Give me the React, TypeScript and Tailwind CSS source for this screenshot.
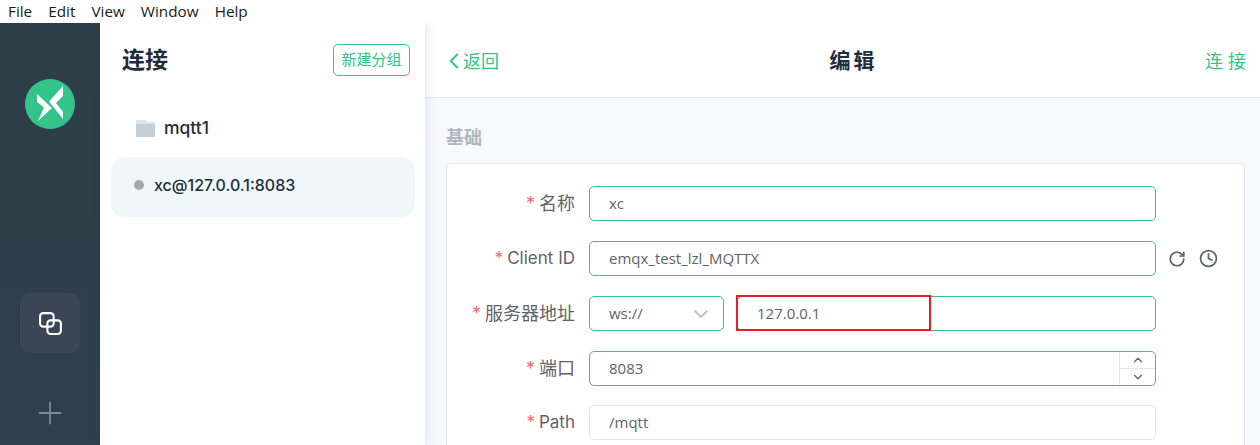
import { ChevronDown, ChevronLeft, ChevronUp, Clock, Plus, RotateCw } from 'lucide-react'
import type { ReactNode } from 'react'

const menus = ['File', 'Edit', 'View', 'Window', 'Help']

const Logo = () => (
  <svg viewBox="0 0 50 50" className="h-[50px] w-[50px]">
    <circle cx="25" cy="25" r="25" fill="#34c388" />
    <path d="M12 15 L27 29 L13 42 L19 28.5 L12 23 Z" fill="#fff" />
    <path d="M38 7 L38 17 L31 24 L38 33 L38 40 L24 22.5 Z" fill="#fff" />
  </svg>
)

const Field = ({
  label,
  children,
  after,
  latin = false,
  className = '',
}: {
  label: string
  children: ReactNode
  after?: ReactNode
  latin?: boolean
  className?: string
}) => (
  <div className={`flex items-center ${className}`}>
    <label
      className={`w-[128px] text-right leading-none text-[#5f6368] ${
        latin ? 'text-[17px]' : 'text-[18px]'
      }`}
    >
      <span className="mr-1 text-[#f56c6c]">*</span>
      {label}
    </label>
    <div className="ml-[14px] flex w-[567px] gap-[13px]">{children}</div>
    {after}
  </div>
)

const Input = ({
  value,
  active = true,
  children,
  className = '',
}: {
  value: string
  active?: boolean
  children?: ReactNode
  className?: string
}) => (
  <div
    className={`flex h-[35px] items-center rounded-[5px] border pl-[19px] font-['Open_Sans',sans-serif] text-[15px] text-[#5f6368] ${
      active ? 'border-[#34c388]' : 'border-[#e4e7f0]'
    } ${className}`}
  >
    <span className="flex-1">{value}</span>
    {children}
  </div>
)

export default function App() {
  return (
    <div className="flex h-[445px] w-[1260px] flex-col overflow-hidden bg-white font-['Inter','Noto_Sans_CJK_SC',sans-serif]">
      <div className="relative z-20 flex h-[23px] shrink-0 items-center gap-[16px] bg-white pl-2 font-['Open_Sans',sans-serif] text-[15.3px] text-[#1a1a1a]">
        {menus.map((m) => (
          <span key={m}>{m}</span>
        ))}
      </div>

      <div className="flex min-h-0 flex-1">
        <aside className="flex w-[100px] shrink-0 flex-col items-center bg-gradient-to-b from-[#2c3e47] to-[#303f4d] pt-[56px]">
          <Logo />
          <div className="mt-[164px] flex h-[60px] w-[60px] items-center justify-center rounded-[10px] bg-[#3a4655]">
            <svg viewBox="0 0 24 24" className="h-[25px] w-[25px]" fill="none" stroke="#fff" strokeWidth="2">
              <rect x="2" y="2" width="13" height="13" rx="3" />
              <rect x="9" y="9" width="13" height="13" rx="3" />
            </svg>
          </div>
          <Plus className="mt-[42px] h-[36px] w-[36px] text-[#7c8a94]" strokeWidth={1.2} />
        </aside>

        <section className="relative z-10 w-[325px] shrink-0 bg-white pl-[11px] pr-[10px] shadow-[2px_0_10px_rgba(60,70,130,0.12)]">
          <div className="flex h-[74px] items-center justify-between pl-[11px] pr-[5px]">
            <h2 className="text-[23px] font-bold text-[#232c3b]">连接</h2>
            <button className="h-[32px] w-[77px] rounded-[5px] border border-[#34c388] text-[15px] text-[#34c388]">
              新建分组
            </button>
          </div>
          <div className="mt-[4px] flex h-[56px] items-center gap-[9px] pb-[2px] pl-[25px] text-[17.5px] font-medium text-[#232c3b]">
            <svg viewBox="0 0 19 18" className="h-[18px] w-[19px]">
              <path d="M0 1 H9 L11 3 H19 V18 H0 Z" fill="#c3d0d9" />
              <path d="M0 1 H9 L11 3 H19 V5 H0 Z" fill="#dfe6eb" />
            </svg>
            mqtt1
          </div>
          <div className="flex h-[60px] items-center gap-[10px] rounded-[13px] bg-[#f0f7fb] pb-[4px] pl-[23px] text-[16px] font-medium text-[#232c3b]">
            <span className="h-[10px] w-[10px] rounded-full bg-[#a2a9b0]" />
            xc@127.0.0.1:8083
          </div>
        </section>

        <main className="flex min-w-0 flex-1 flex-col bg-[#f8f9fd]">
          <header className="flex h-[75px] shrink-0 items-center justify-between border-b border-[#e4e7f0] bg-white pl-[21px] pr-[9px] pt-[2px]">
            <div className="flex items-center text-[18px] text-[#34c388]">
              <ChevronLeft className="-mx-[5px] h-[26px] w-[26px]" strokeWidth={1.8} />
              <span className="ml-[1px]">返回</span>
            </div>
            <h1 className="ml-[3px] text-[21px] font-bold tracking-[3px] text-[#232c3b]">编辑</h1>
            <div className="text-[18px] tracking-[5px] text-[#34c388]">连接</div>
          </header>

          <div className="flex-1 overflow-hidden pl-[21px] pr-[15px]">
            <h3 className="mt-[27px] text-[18px] font-bold leading-[26px] text-[#b0b6bd]">基础</h3>
            <div className="mt-[12px] flex flex-col gap-[20px] rounded-t-[5px] border border-[#e4e7f0] bg-white pb-10 pt-[22px]">
              <Field label="名称">
                <Input value="xc" className="w-full" />
              </Field>
              <Field
                label="Client ID"
                latin
                after={
                  <div className="ml-[12px] flex items-center gap-[13px] text-[#5f6368]">
                    <RotateCw className="h-[18px] w-[18px]" strokeWidth={2.3} />
                    <Clock className="h-[19px] w-[19px]" strokeWidth={2.2} />
                  </div>
                }
              >
                <Input value="emqx_test_lzl_MQTTX" className="w-full" />
              </Field>
              <Field label="服务器地址">
                <Input value="ws://" className="w-[135px] shrink-0 pr-[10px]">
                  <ChevronDown className="h-[24px] w-[24px] text-[#c0c4cc]" strokeWidth={2} />
                </Input>
                <div className="relative min-w-0 flex-1">
                  <Input value="127.0.0.1" className="w-full" />
                  <div className="absolute -left-[1px] -top-[1px] h-[36px] w-[195px] border-2 border-[#ed1c24]" />
                </div>
              </Field>
              <Field label="端口">
                <Input value="8083" className="w-full">
                  <div className="flex h-full w-[36px] flex-col border-l border-[#e4e7f0] text-[#5f6368]">
                    <div className="flex flex-1 items-center justify-center border-b border-[#e4e7f0]">
                      <ChevronUp className="h-[14px] w-[14px]" />
                    </div>
                    <div className="flex flex-1 items-center justify-center">
                      <ChevronDown className="h-[14px] w-[14px]" />
                    </div>
                  </div>
                </Input>
              </Field>
              <Field label="Path" latin className="-mt-px">
                <Input value="/mqtt" active={false} className="w-full" />
              </Field>
            </div>
          </div>
        </main>
      </div>
    </div>
  )
}
